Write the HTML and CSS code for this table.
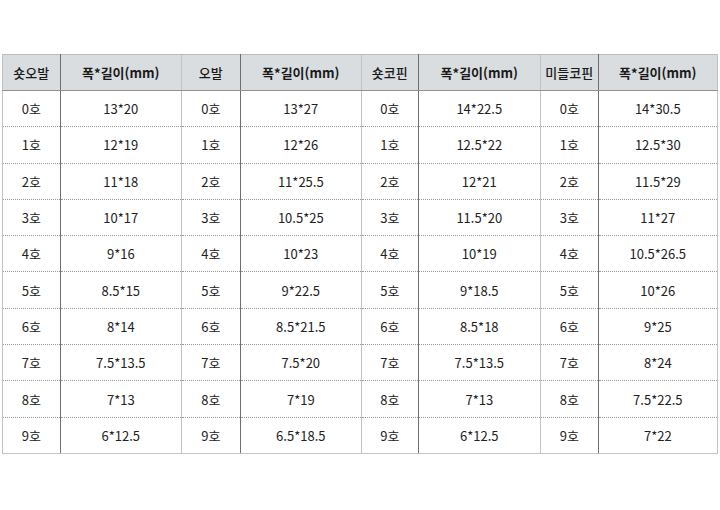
FILE: index.html
```html
<!DOCTYPE html>
<html lang="ko">
<head>
<meta charset="utf-8">
<link rel="stylesheet" href="styles.css">
</head>
<body>
<div class="sheet">
  <table class="size t1">
    <thead><tr><th class="c1">숏오발</th><th class="c2">폭*길이(mm)</th></tr></thead>
    <tbody>
      <tr><td>0호</td><td>13*20</td></tr>
      <tr><td>1호</td><td>12*19</td></tr>
      <tr><td>2호</td><td>11*18</td></tr>
      <tr><td>3호</td><td>10*17</td></tr>
      <tr><td>4호</td><td>9*16</td></tr>
      <tr><td>5호</td><td>8.5*15</td></tr>
      <tr><td>6호</td><td>8*14</td></tr>
      <tr><td>7호</td><td>7.5*13.5</td></tr>
      <tr><td>8호</td><td>7*13</td></tr>
      <tr><td>9호</td><td>6*12.5</td></tr>
    </tbody>
  </table>
  <table class="size t2">
    <thead><tr><th class="c1">오발</th><th class="c2">폭*길이(mm)</th></tr></thead>
    <tbody>
      <tr><td>0호</td><td>13*27</td></tr>
      <tr><td>1호</td><td>12*26</td></tr>
      <tr><td>2호</td><td>11*25.5</td></tr>
      <tr><td>3호</td><td>10.5*25</td></tr>
      <tr><td>4호</td><td>10*23</td></tr>
      <tr><td>5호</td><td>9*22.5</td></tr>
      <tr><td>6호</td><td>8.5*21.5</td></tr>
      <tr><td>7호</td><td>7.5*20</td></tr>
      <tr><td>8호</td><td>7*19</td></tr>
      <tr><td>9호</td><td>6.5*18.5</td></tr>
    </tbody>
  </table>
  <table class="size t3">
    <thead><tr><th class="c1">숏코핀</th><th class="c2">폭*길이(mm)</th></tr></thead>
    <tbody>
      <tr><td>0호</td><td>14*22.5</td></tr>
      <tr><td>1호</td><td>12.5*22</td></tr>
      <tr><td>2호</td><td>12*21</td></tr>
      <tr><td>3호</td><td>11.5*20</td></tr>
      <tr><td>4호</td><td>10*19</td></tr>
      <tr><td>5호</td><td>9*18.5</td></tr>
      <tr><td>6호</td><td>8.5*18</td></tr>
      <tr><td>7호</td><td>7.5*13.5</td></tr>
      <tr><td>8호</td><td>7*13</td></tr>
      <tr><td>9호</td><td>6*12.5</td></tr>
    </tbody>
  </table>
  <table class="size t4">
    <thead><tr><th class="c1">미들코핀</th><th class="c2">폭*길이(mm)</th></tr></thead>
    <tbody>
      <tr><td>0호</td><td>14*30.5</td></tr>
      <tr><td>1호</td><td>12.5*30</td></tr>
      <tr><td>2호</td><td>11.5*29</td></tr>
      <tr><td>3호</td><td>11*27</td></tr>
      <tr><td>4호</td><td>10.5*26.5</td></tr>
      <tr><td>5호</td><td>10*26</td></tr>
      <tr><td>6호</td><td>9*25</td></tr>
      <tr><td>7호</td><td>8*24</td></tr>
      <tr><td>8호</td><td>7.5*22.5</td></tr>
      <tr><td>9호</td><td>7*22</td></tr>
    </tbody>
  </table>
</div>
</body>
</html>
```
FILE: styles.css
```css
html, body {
  margin: 0;
  padding: 0;
  background: #ffffff;
}
body {
  width: 720px;
  height: 510px;
  font-family: "Noto Sans CJK KR", "Noto Sans", sans-serif;
  color: #222222;
}
.sheet {
  display: flex;
  padding: 54px 2px 0 2px;
}
.size {
  border-collapse: collapse;
  table-layout: fixed;
}
.size th, .size td {
  padding: 0;
  text-align: center;
  font-size: 13px;
  line-height: 1;
}
.size th {
  height: 35px;
  background: #d9dde0;
  font-weight: 500;
  color: #1a1a1a;
  border-top: 1px solid #b9bdc0;
  border-bottom: 1px solid #8e9295;
}
.size td {
  height: 35.1px;
  border-bottom: 1px dotted #9a9a9a;
}
.size tbody tr:last-child td {
  border-bottom: 1px solid #c4c4c4;
}
.size .c1, .size td:first-child {
  border-left: 1px solid #c2c2c2;
  border-right: 1px solid #6e6e6e;
}
.size th.c2 {
  font-weight: 700;
}
.t1 .c1 { width: 57px; }
.t1 .c2 { width: 121px; }
.t2 .c1 { width: 58px; }
.t2 .c2 { width: 121px; }
.t3 .c1 { width: 56px; }
.t3 .c2 { width: 122px; }
.t4 .c1 { width: 57px; }
.t4 .c2 { width: 119px; border-right: 1px solid #c2c2c2; }
.t4 td:last-child { border-right: 1px solid #c2c2c2; }
.t4 td { height: 35.3px; }
```
